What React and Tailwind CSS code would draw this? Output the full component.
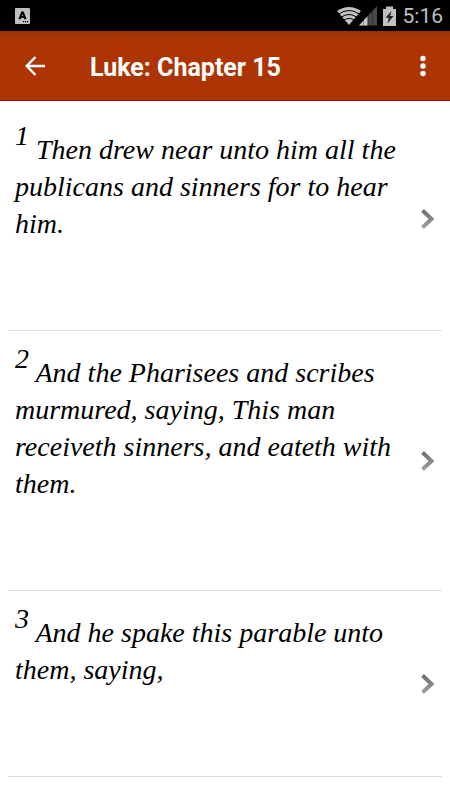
import React from 'react';

const verses = [
    { number: 1, text: 'Then drew near unto him all the publicans and sinners for to hear him.' },
    { number: 2, text: 'And the Pharisees and scribes murmured, saying, This man receiveth sinners, and eateth with them.' },
    { number: 3, text: 'And he spake this parable unto them, saying,' },
];

function StatusBar() {
    return (
        <div className="flex h-[31px] items-center justify-between bg-black pr-[7px] pl-[15px] text-[#c0c0c0]">
            <svg width="15" height="16" viewBox="0 0 15 16" aria-hidden="true">
                <rect width="15" height="16" rx="1" fill="#c0c0c0" />
                <path d="M4.5 11.2 7.2 4.2h.6l2.700 7M5.500 9h4" fill="none" stroke="#000" strokeWidth="2" strokeLinejoin="bevel" />
                <path d="M8 13h1.200v1.200H8zM10 13h1.200v1.200H10zM12 13h1.200v1.200H12z" fill="#000" />
            </svg>
            <div className="flex items-center">
                <svg width="61" height="22" viewBox="0 0 61 22" aria-hidden="true">
                    <path d="M1 6Q13-2 25 6L13 20Z" fill="#c0c0c0" />
                    <path d="M3 8.800Q13 2.200 23 8.800M5.500 12Q13 7 20.500 12M8 15Q13 11.800 18 15" fill="none" stroke="#000" strokeWidth="1" />
                    <path d="M23 20.500 41 1V20.500Z" fill="#4a4a4a" />
                    <path d="M23 20.500 31.500 11.300V20.500Z" fill="#c8c8c8" />
                    <path d="M27.500 14V20.500M32 9V20.500M36.500 5V20.500" stroke="#000" strokeOpacity=".3" />
                    <path d="M47 4h3V1.500h7V4h3V21H47Z" fill="#c0c0c0" />
                    <path d="M55.500 6 49.500 12.700h3.300L51.500 18.500 57.500 11h-3.300Z" fill="#222" />
                </svg>
                <span className="ml-1.5 pt-0.5 font-['Roboto',sans-serif] text-[21px] leading-none">5:16</span>
            </div>
        </div>
    );
}

function Toolbar() {
    return (
        <header className="flex h-[70px] items-center border-b border-[#b30000] bg-[#ad3505] bg-linear-to-b from-[#963007] to-[#ad3505] to-10% px-[11px] text-white">
            <button type="button" aria-label="Back" className="flex size-12 items-center justify-center">
                <svg width="20" height="20" viewBox="0 0 20 20" fill="none" stroke="currentColor" strokeWidth="2.4" aria-hidden="true">
                    <path d="M20 10H2M10.500 1 1.700 10l8.800 9" />
                </svg>
            </button>
            <h1 className="ml-[31px] flex-1 pt-1 font-['Roboto',sans-serif] text-[25px] leading-8 font-bold">Luke: Chapter 15</h1>
            <button type="button" aria-label="More options" className="flex h-12 w-8 items-center justify-center">
                <svg width="6" height="22" viewBox="0 0 6 22" fill="currentColor" aria-hidden="true">
                    <circle cx="3" cy="3.500" r="2.700" />
                    <circle cx="3" cy="11" r="2.700" />
                    <circle cx="3" cy="18.500" r="2.700" />
                </svg>
            </button>
        </header>
    );
}

function Chevron() {
    return (
        <svg width="16" height="22" viewBox="0 0 16 22" className="shrink-0" aria-hidden="true">
            <defs>
                <linearGradient id="chevron" x1="0" y1="0" x2="0" y2="1">
                    <stop offset="0" stopColor="#6e6e6e" />
                    <stop offset=".5" stopColor="#858585" />
                    <stop offset="1" stopColor="#a2a2a2" />
                </linearGradient>
            </defs>
            <path d="M2.500 2.500 11.500 11 2.500 19.500" fill="none" stroke="url(#chevron)" strokeWidth="4" />
        </svg>
    );
}

function App() {
    return (
        <div className="min-h-screen bg-white">
            <StatusBar />
            <Toolbar />
            <main className="px-2 pt-[7px] pb-2">
                <ul>
                    {verses.map((verse) => (
                        <li key={verse.number} className="border-b border-[#dcdcdc]">
                            <a href={`#verse-${verse.number}`} className="flex items-center pr-1.5 pl-[7px]">
                                <p className="flex-1 pt-[23px] pr-3 pb-[88px] font-['Liberation_Serif',serif] text-[28px] leading-[37px] text-black italic">
                                    <sup className="text-[28px]">{verse.number}</sup> {verse.text}
                                </p>
                                <Chevron />
                            </a>
                        </li>
                    ))}
                </ul>
            </main>
        </div>
    );
}

export default App;
